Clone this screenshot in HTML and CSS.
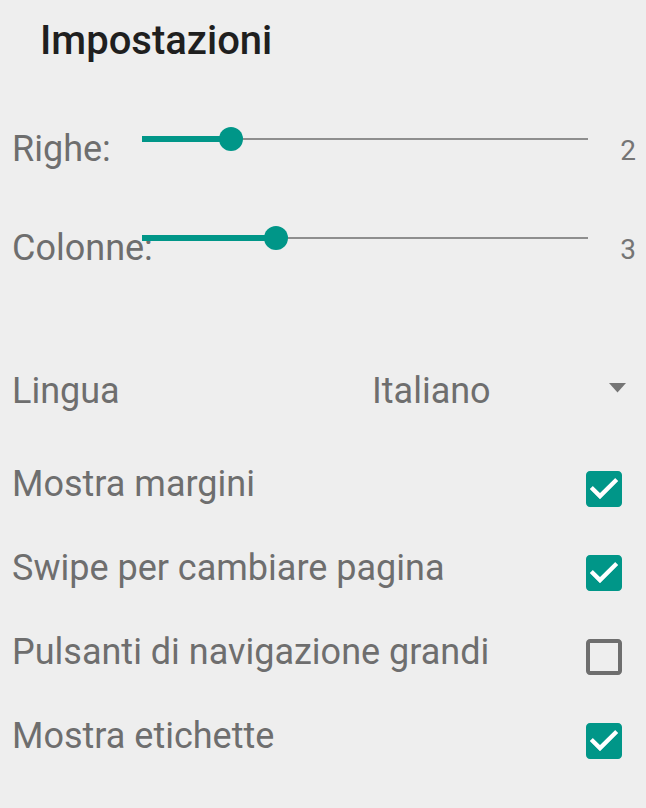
FILE: index.html
```html
<!DOCTYPE html>
<html lang="it">
<head>
<meta charset="utf-8">
<title>Impostazioni</title>
<link rel="stylesheet" href="styles.css">
</head>
<body>
<main class="settings">
  <h1 class="title">Impostazioni</h1>

  <div class="slider-row">
    <span class="label">Righe:</span>
    <div class="slider">
      <div class="fill" style="width:20%"></div>
      <div class="thumb"></div>
      <div class="rest"></div>
    </div>
    <span class="value">2</span>
  </div>

  <div class="slider-row">
    <span class="label">Colonne:</span>
    <div class="slider">
      <div class="fill" style="width:30%"></div>
      <div class="thumb"></div>
      <div class="rest"></div>
    </div>
    <span class="value">3</span>
  </div>

  <div class="select-row">
    <span class="label">Lingua</span>
    <span class="label">Italiano</span>
    <svg class="arrow" width="17" height="10" viewBox="0 0 17 10"><polygon points="0,0 17,0 8.5,9.5" fill="#757575"/></svg>
  </div>

  <div class="check-row">
    <span class="label">Mostra margini</span>
    <svg class="box" width="36" height="36" viewBox="3 3 18 18"><path fill="#009688" d="M19 3H5c-1.11 0-2 .9-2 2v14c0 1.1.89 2 2 2h14c1.11 0 2-.9 2-2V5c0-1.1-.89-2-2-2zm-9 14l-5-5 1.41-1.41L10 14.17l7.59-7.59L19 8l-9 9z"/><path fill="#fff" d="M10 17l-5-5 1.41-1.41L10 14.17l7.59-7.59L19 8l-9 9z"/></svg>
  </div>
  <div class="check-row">
    <span class="label">Swipe per cambiare pagina</span>
    <svg class="box" width="36" height="36" viewBox="3 3 18 18"><path fill="#009688" d="M19 3H5c-1.11 0-2 .9-2 2v14c0 1.1.89 2 2 2h14c1.11 0 2-.9 2-2V5c0-1.1-.89-2-2-2zm-9 14l-5-5 1.41-1.41L10 14.17l7.59-7.59L19 8l-9 9z"/><path fill="#fff" d="M10 17l-5-5 1.41-1.41L10 14.17l7.59-7.59L19 8l-9 9z"/></svg>
  </div>
  <div class="check-row">
    <span class="label">Pulsanti di navigazione grandi</span>
    <svg class="box" width="36" height="36" viewBox="3 3 18 18"><path fill="#6e6e6e" d="M19 5v14H5V5h14m0-2H5c-1.1 0-2 .9-2 2v14c0 1.1.9 2 2 2h14c1.1 0 2-.9 2-2V5c0-1.1-.9-2-2-2z"/></svg>
  </div>
  <div class="check-row">
    <span class="label">Mostra etichette</span>
    <svg class="box" width="36" height="36" viewBox="3 3 18 18"><path fill="#009688" d="M19 3H5c-1.11 0-2 .9-2 2v14c0 1.1.89 2 2 2h14c1.11 0 2-.9 2-2V5c0-1.1-.89-2-2-2zm-9 14l-5-5 1.41-1.41L10 14.17l7.59-7.59L19 8l-9 9z"/><path fill="#fff" d="M10 17l-5-5 1.41-1.41L10 14.17l7.59-7.59L19 8l-9 9z"/></svg>
  </div>
</main>
</body>
</html>
```

FILE: styles.css
```css
html, body {
  margin: 0;
  padding: 0;
  background: #eeeeee;
}
body {
  font-family: Roboto, "Noto Sans", sans-serif;
  width: 646px;
  height: 808px;
  overflow: hidden;
}
.settings {
  display: flex;
  flex-direction: column;
}
.title {
  margin: 19px 0 52px 40px;
  font-size: 40px;
  line-height: 44px;
  font-weight: 500;
  color: #1f1f1f;
}
.label {
  font-size: 36px;
  line-height: 40px;
  color: #6e6e6e;
  white-space: nowrap;
}
.slider-row {
  display: grid;
  grid-template-columns: 130px 446px 1fr;
  align-items: start;
  height: 99px;
  padding-left: 12px;
}
.slider-row .label {
  margin-top: 14px;
}
.slider {
  display: flex;
  align-items: center;
  height: 24px;
  margin-top: 12px;
}
.fill {
  height: 6px;
  background: #009688;
}
.thumb {
  width: 24px;
  height: 24px;
  border-radius: 50%;
  background: #009688;
  margin: 0 -12px;
  position: relative;
  z-index: 1;
  flex: none;
}
.rest {
  flex: 1;
  height: 2px;
  background: #8e8e8e;
}
.value {
  margin-top: 16px;
  font-size: 28px;
  line-height: 40px;
  color: #757575;
  text-align: right;
  padding-right: 10px;
}
.select-row {
  display: grid;
  grid-template-columns: 360px 1fr auto;
  align-items: start;
  padding: 58px 20px 36px 12px;
}
.arrow {
  margin-top: 12px;
  display: block;
}
.check-row {
  display: grid;
  grid-template-columns: 1fr 36px;
  align-items: start;
  height: 84px;
  padding: 0 24px 0 12px;
}
.check-row .label {
  margin-top: 17px;
}
.box {
  display: block;
  margin-top: 24px;
}
```
